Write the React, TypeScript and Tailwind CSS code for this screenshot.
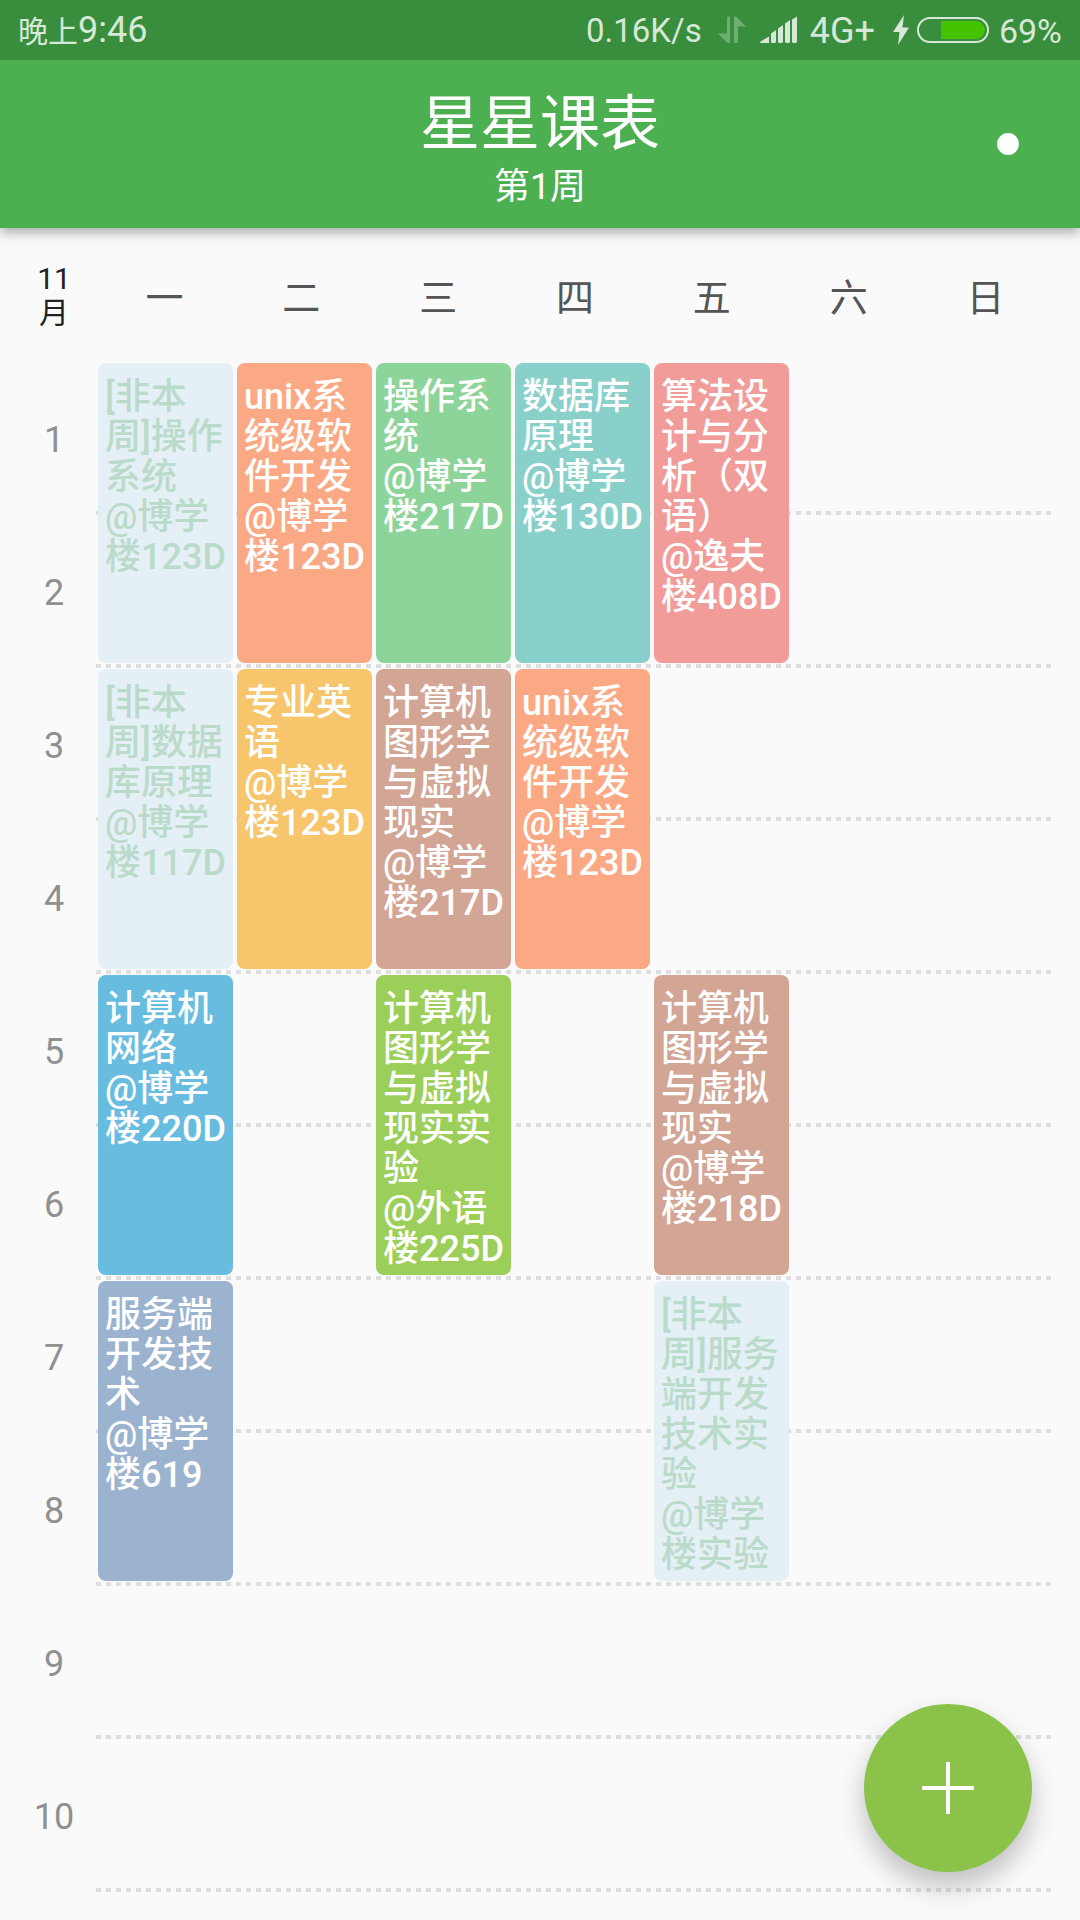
import React from "react";

type Course = { day: number; start: number; text: string; tone: string };

const COURSES: Course[] = [
  { day: 1, start: 1, text: "[非本\n周]操作\n系统\n@博学\n楼123D", tone: "bg-[#e4eff6] text-[#badbc9]" },
  { day: 2, start: 1, text: "unix系\n统级软\n件开发\n@博学\n楼123D", tone: "bg-[#fba985] text-white" },
  { day: 3, start: 1, text: "操作系\n统\n@博学\n楼217D", tone: "bg-[#8cd499] text-white" },
  { day: 4, start: 1, text: "数据库\n原理\n@博学\n楼130D", tone: "bg-[#89d0cb] text-white" },
  { day: 5, start: 1, text: "算法设\n计与分\n析（双\n语）\n@逸夫\n楼408D", tone: "bg-[#f29c99] text-white" },
  { day: 1, start: 3, text: "[非本\n周]数据\n库原理\n@博学\n楼117D", tone: "bg-[#e4eff6] text-[#badbc9]" },
  { day: 2, start: 3, text: "专业英\n语\n@博学\n楼123D", tone: "bg-[#f7c56b] text-white" },
  { day: 3, start: 3, text: "计算机\n图形学\n与虚拟\n现实\n@博学\n楼217D", tone: "bg-[#d3a595] text-white" },
  { day: 4, start: 3, text: "unix系\n统级软\n件开发\n@博学\n楼123D", tone: "bg-[#fba985] text-white" },
  { day: 1, start: 5, text: "计算机\n网络\n@博学\n楼220D", tone: "bg-[#68bcdf] text-white" },
  { day: 3, start: 5, text: "计算机\n图形学\n与虚拟\n现实实\n验\n@外语\n楼225D", tone: "bg-[#9ccf5a] text-white" },
  { day: 5, start: 5, text: "计算机\n图形学\n与虚拟\n现实\n@博学\n楼218D", tone: "bg-[#d3a595] text-white" },
  { day: 1, start: 7, text: "服务端\n开发技\n术\n@博学\n楼619", tone: "bg-[#9bb3cf] text-white" },
  { day: 5, start: 7, text: "[非本\n周]服务\n端开发\n技术实\n验\n@博学\n楼实验", tone: "bg-[#e4eff6] text-[#badbc9]" },
];

const DAYS = ["一", "二", "三", "四", "五", "六", "日"];
const PERIODS = [1, 2, 3, 4, 5, 6, 7, 8, 9, 10];

const COL = ["", "col-start-1", "col-start-2", "col-start-3", "col-start-4", "col-start-5"];
const ROW: Record<number, string> = {
  1: "row-start-1",
  3: "row-start-3",
  5: "row-start-5",
  7: "row-start-7",
};

function StatusBar() {
  return (
    <div className="flex h-[60px] items-center bg-[#388e3c] px-[18px] text-[34px] leading-[60px] text-[#d7e8d8]">
      <span className="pt-0.5 text-[36px]">
        <span className="text-[30px]">晚上</span>9:46
      </span>
      <div className="ml-auto flex items-center">
        <span className="pt-0.5 text-[33px]">0.16K/s</span>
        <svg className="ml-4 h-[28px] w-[28px]" viewBox="0 0 28 28" fill="#6fae72">
          <path d="M9 1.5q0-1 1-1h1q1 0 1 1V27h-2.500L0 17.500h9z" />
          <path d="M20 26q0 1-1 1h-2q-1 0-1-1V.5h2L28 10.500h-8z" />
        </svg>
        <svg className="ml-3.5 h-[28px] w-[38px]" viewBox="0 0 38 28" fill="#d7e8d8">
          <path d="M1 27a1 1 0 0 1-.5-1.500L9 20.500V27zM11 17.500l5-3.500V26l-1 1h-3l-1-1zM18 12.500l5-3.500V26l-1 1h-3l-1-1zM25 7.500l5-3.500V26l-1 1h-3l-1-1zM32 3.500l5-3V26l-1 1h-3l-1-1z" />
        </svg>
        <span className="ml-3 pt-0.5 text-[36px]">4G+</span>
        <svg className="ml-[18px] h-[30px] w-[16px]" viewBox="0 0 16 30" fill="#d7e8d8">
          <path d="M11 0L0 17h6.500L5 30 16 12.500H9.500z" />
        </svg>
        <svg className="ml-2 h-[26px] w-[72px]" viewBox="0 0 72 26">
          <rect x="1" y="1" width="70" height="24" rx="12" fill="none" stroke="#d7e8d8" strokeWidth="2" />
          <path d="M24 4h35a9 9 0 0 1 0 18H24z" fill="#46c300" />
        </svg>
        <span className="ml-2.5 pt-0.5">69%</span>
      </div>
    </div>
  );
}

function DashedLine() {
  return (
    <svg className="h-1 w-full" aria-hidden="true">
      <line x1="0" y1="2" x2="100%" y2="2" stroke="#dedede" strokeWidth="4" strokeDasharray="5 5" />
    </svg>
  );
}

export default function App() {
  return (
    <div className="relative min-h-screen overflow-hidden bg-[#fafafa] font-[Roboto,'Noto_Sans_CJK_SC',sans-serif]">
      <header className="relative shadow-[0_4px_12px_rgba(0,0,0,0.35)]">
        <StatusBar />
        <div className="relative flex h-[168px] flex-col items-center bg-[#4caf50] pt-7 text-white">
          <h1 className="text-[60px] leading-[74px]">星星课表</h1>
          <p className="text-[36px] leading-[50px]">第1周</p>
          <button aria-label="菜单" className="absolute top-1/2 right-[48px] flex size-12 -translate-y-1/2 items-center justify-center">
            <span className="size-[22px] rounded-full bg-white" />
          </button>
        </div>
      </header>

      <main className="pr-[26px]">
        <div className="flex h-[132px] items-center pt-1">
          <div className="w-24 pl-3 text-center text-[30px] leading-[34px] text-[#212121]">
            11
            <br />月
          </div>
          <div className="grid flex-1 grid-cols-7 pt-1 text-center text-[38px] leading-[48px] text-[#555555]">
            {DAYS.map((day) => (
              <span key={day}>{day}</span>
            ))}
          </div>
        </div>

        <div className="flex">
          <ol className="w-24 pl-3 text-center text-[36px] text-[#909090]">
            {PERIODS.map((period) => (
              <li key={period} className="flex h-[153px] items-center justify-center pt-1.5">
                {period}
              </li>
            ))}
          </ol>
          <div className="relative flex-1">
            {PERIODS.map((period) => (
              <div key={period} className="flex h-[153px] translate-y-0.5 items-end">
                <DashedLine />
              </div>
            ))}
            <div className="absolute top-0 -right-[13px] left-0.5 grid grid-cols-7 grid-rows-[repeat(10,153px)] gap-x-1">
              {COURSES.map((course) => (
                <button
                  key={`${course.day}-${course.start}`}
                  className={`${COL[course.day]} ${ROW[course.start]} ${course.tone} row-span-2 my-[3px] flex items-start overflow-hidden rounded-lg pt-3.5 pl-[7px] text-left text-[36px] leading-10 font-medium whitespace-pre-line`}
                >
                  {course.text}
                </button>
              ))}
            </div>
          </div>
        </div>
      </main>

      <button
        aria-label="添加课程"
        className="absolute right-12 bottom-12 flex size-[168px] items-center justify-center rounded-full bg-[#8bc34a] shadow-[0_14px_28px_rgba(0,0,0,0.24)]"
      >
        <svg className="size-[52px]" viewBox="0 0 52 52" stroke="white" strokeWidth="4">
          <path d="M26 0v52M0 26h52" />
        </svg>
      </button>
    </div>
  );
}
